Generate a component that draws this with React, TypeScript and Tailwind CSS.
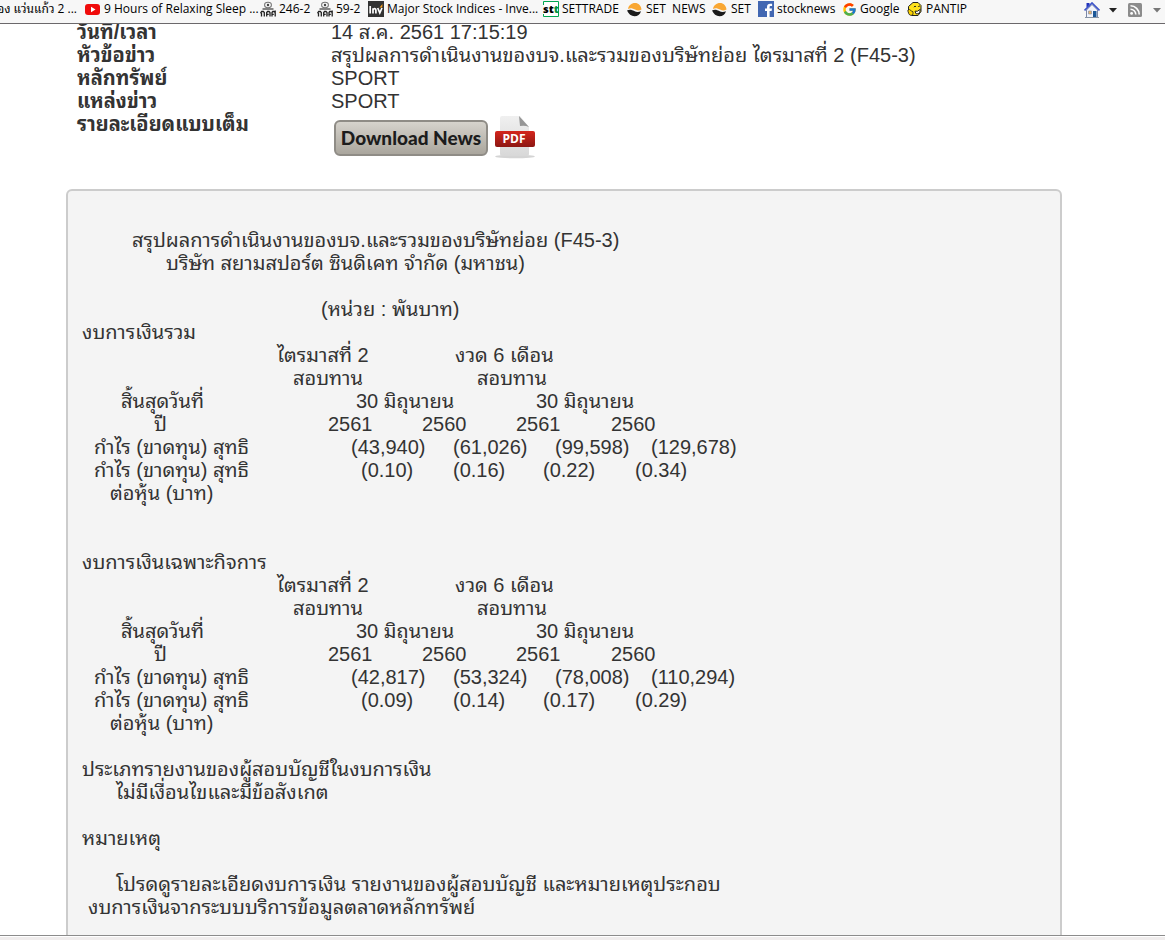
import React from "react";
import { FcGoogle } from "react-icons/fc";

const YoutubeIcon = () => (
  <svg width="16" height="16" viewBox="0 0 16 16" className="shrink-0">
    <rect x="0" y="3" width="15" height="11" rx="3" fill="#f00b0b" />
    <path d="M6 5.8v5.400l4.500-2.700z" fill="#fff" />
  </svg>
);

const KltIcon = () => (
  <svg width="16" height="16" viewBox="0 0 16 16" className="shrink-0" fill="none" stroke="#777">
    <ellipse cx="8" cy="4" rx="3.400" ry="2.700" strokeWidth="1.100" />
    <circle cx="8" cy="4" r="1.200" fill="#444" stroke="none" />
    <path d="M2.500 8h11" strokeWidth="1.800" />
    <path
      d="M1.500 15.500v-3l-.7-.8.9-1.200h1.600l1 1v4M6.700 15.500v-4l.9-1h1.400l1 1v4M7 13.300h1.700M12 15.500v-4l.8-1h1.200l1.200 1v4M12.300 13.300h1.500M15.200 11V9.500"
      stroke="#222"
      strokeWidth="1.300"
    />
  </svg>
);

const InvIcon = () => (
  <svg width="16" height="16" viewBox="0 0 16 16" className="shrink-0">
    <rect width="16" height="16" fill="#333" />
    <path d="M2.200 5v7.500M5 12.500V7.200M5 8.600c.8-1.500 2.900-1.400 2.900.4v3.500" stroke="#fff" strokeWidth="1.700" fill="none" />
    <path d="M9.700 7l2.100 4.800L14 7" stroke="#fff" strokeWidth="1.700" fill="none" />
    <path d="M11.500 6.500L14.500 3l-.3 3.500z" fill="#f7a01b" />
  </svg>
);

const SttIcon = () => (
  <svg width="16" height="16" viewBox="0 0 16 16" className="shrink-0">
    <path d="M.5 4V.5h15V15.500H.5V13" fill="#fff" stroke="#00a651" />
    <text x="0" y="12" fontSize="11" fontWeight="800" fontFamily="Open Sans, sans-serif">
      st<tspan fill="#00913f">t</tspan>
    </text>
  </svg>
);

const SetIcon = () => (
  <svg width="16" height="16" viewBox="0 0 16 16" className="shrink-0">
    <path d="M1 8C1.500 4.500 4.500 2 8 2s6 2.500 6.500 6.500C12 10 10.500 9.800 8 8.500S3.500 6.500 1 8z" fill="#f9a733" />
    <path d="M0 9.500c2.500-1.500 5-.8 7.200.5s4.500 1.200 6.800.2c-1 3.200-3.300 5-6.500 5S1.500 13 0 9.500z" fill="#1b1b1b" />
  </svg>
);

const FacebookIcon = () => (
  <svg width="16" height="16" viewBox="0 0 16 16" className="shrink-0">
    <rect width="16" height="16" fill="#4267b2" />
    <path d="M9 16v-6H7V7.600h2V6c0-2.200 1.300-3.300 3.200-3.300h1.900V5h-1.300c-.9 0-1.200.4-1.200 1.200v1.400H14l-.4 2.400h-2v6z" fill="#fff" />
  </svg>
);

const PantipIcon = () => (
  <svg width="16" height="16" viewBox="0 0 16 16" className="shrink-0" stroke="#222">
    <path d="M6 1.500h5l3 3v6l-3 4H5l-3.500-3v-6z" fill="#ffe11a" strokeLinejoin="round" />
    <path d="M.7 9.500l1.800-1 2 1.500 1.500.8v2.700l-2 1-2-1.200z" fill="#ffd400" strokeWidth=".8" />
    <path d="M8 10.200h2.500L13.300 8.300l-.5 3-1.800 1.500H9z" fill="#fff" strokeWidth="1" />
    <path d="M7 6.200l1-1.200 1 .8M11.200 5.800l.8-1 .9.600" fill="none" strokeWidth="1" />
  </svg>
);

const HomeIcon = () => (
  <svg width="16" height="16" viewBox="0 0 16 16">
    <path d="M2.500 1h3v4h-3z" fill="#2233bb" />
    <path d="M2.500 8v7.500h11V8L8 2.500z" fill="#f2f4fb" stroke="#7c88a8" />
    <path d="M.5 8.500L8 1l7.500 7.500" fill="none" stroke="#3f55c8" strokeWidth="1.700" />
    <path d="M4.500 9h3v3h-3z" fill="#e9b768" stroke="#7c88a8" strokeWidth=".6" />
    <path d="M9 9h3.500v6.500H9z" fill="#1c5797" />
    <path d="M1 15.500h14" stroke="#8794a5" />
  </svg>
);

const RssIcon = () => (
  <svg width="16" height="16" viewBox="0 0 16 16">
    <rect x="1" y="1" width="14" height="14" rx="1.500" fill="#8c8c8c" />
    <circle cx="4.600" cy="11.400" r="1.400" fill="#fff" />
    <path d="M3.500 7.200a5.300 5.300 0 0 1 5.300 5.300M3.500 3.800a8.700 8.700 0 0 1 8.700 8.700" fill="none" stroke="#fff" strokeWidth="1.600" />
  </svg>
);

const PdfIcon = () => (
  <svg width="42" height="43" viewBox="0 0 42 43">
    <defs>
      <linearGradient id="page" x1="0" y1="0" x2="0" y2="1">
        <stop offset="0" stopColor="#f0f0f0" />
        <stop offset="1" stopColor="#d8d8d8" />
      </linearGradient>
      <linearGradient id="band" x1="0" y1="0" x2="0" y2="1">
        <stop offset="0" stopColor="#d4251c" />
        <stop offset="1" stopColor="#8c1713" />
      </linearGradient>
    </defs>
    <ellipse cx="21" cy="40.500" rx="20" ry="1.800" fill="#d4d4d4" />
    <path d="M8 0h18l9 11v27q0 2-2 2H8q-2 0-2-2V2q0-2 2-2z" fill="url(#page)" />
    <path d="M25 0l10 11q-4-2-9-1z" fill="#969696" />
    <rect x="1" y="15" width="40" height="16" rx="2" fill="url(#band)" />
    <text x="20" y="27" textAnchor="middle" fontSize="12" fontWeight="700" fontFamily="Open Sans, sans-serif" fill="#fff">
      PDF
    </text>
  </svg>
);

const bookmarks = [
  { label: "9 Hours of Relaxing Sleep ...", icon: <YoutubeIcon />, width: "w-[175px]" },
  { label: "246-2", icon: <KltIcon />, width: "w-[57px]" },
  { label: "59-2", icon: <KltIcon />, width: "w-[51px]" },
  { label: "Major Stock Indices - Inve...", icon: <InvIcon />, width: "w-[175px]" },
  { label: "SETTRADE", icon: <SttIcon />, width: "w-[84px]" },
  { label: "SET  NEWS", icon: <SetIcon />, width: "w-[85px]" },
  { label: "SET", icon: <SetIcon />, width: "w-[46px]" },
  { label: "stocknews", icon: <FacebookIcon />, width: "w-[84px]" },
  { label: "Google", icon: <FcGoogle size={15} className="shrink-0" />, width: "w-[65px]" },
  { label: "PANTIP", icon: <PantipIcon />, width: "w-[64px]" },
];

const newsInfo = [
  { label: "วันที่/เวลา", value: "14 ส.ค. 2561 17:15:19" },
  { label: "หัวข้อข่าว", value: "สรุปผลการดำเนินงานของบจ.และรวมของบริษัทย่อย ไตรมาสที่ 2 (F45-3)" },
  { label: "หลักทรัพย์", value: "SPORT" },
  { label: "แหล่งข่าว", value: "SPORT" },
];

type StatementProps = {
  title: string;
  profit: string[];
  perShare: string[];
};

const Statement = ({ title, profit, perShare }: StatementProps) => (
  <table className="w-[670px] table-fixed text-left whitespace-nowrap [&_th]:font-normal">
    <caption className="text-left">{title}</caption>
    <colgroup>
      <col className="w-[195px]" />
      <col className="w-[145px]" />
      <col className="w-[94px]" />
      <col className="w-[95px]" />
      <col />
    </colgroup>
    <thead>
      <tr>
        <td />
        <th>ไตรมาสที่ 2</th>
        <th colSpan={3} className="pl-[33px]">งวด 6 เดือน</th>
      </tr>
      <tr>
        <td />
        <th className="pl-4">สอบทาน</th>
        <th colSpan={3} className="pl-[55px]">สอบทาน</th>
      </tr>
      <tr>
        <th className="pl-[39px]">สิ้นสุดวันที่</th>
        <th colSpan={2} className="pl-[79px]">30 มิถุนายน</th>
        <th colSpan={2} className="pl-5">30 มิถุนายน</th>
      </tr>
      <tr>
        <th className="pl-[72px]">ปี</th>
        <th className="pl-[51px]">2561</th>
        <th>2560</th>
        <th>2561</th>
        <th>2560</th>
      </tr>
    </thead>
    <tbody>
      <tr>
        <th className="pl-3">กำไร (ขาดทุน) สุทธิ</th>
        <td className="pl-[74px]">{profit[0]}</td>
        <td className="pl-[31px]">{profit[1]}</td>
        <td className="pl-[39px]">{profit[2]}</td>
        <td className="pl-10">{profit[3]}</td>
      </tr>
      <tr>
        <th className="pl-3">กำไร (ขาดทุน) สุทธิ</th>
        <td className="pl-[84px]">{perShare[0]}</td>
        <td className="pl-[31px]">{perShare[1]}</td>
        <td className="pl-[27px]">{perShare[2]}</td>
        <td className="pl-6">{perShare[3]}</td>
      </tr>
      <tr>
        <th className="pl-7">ต่อหุ้น (บาท)</th>
      </tr>
    </tbody>
  </table>
);

const App = () => {
  return (
    <div className="flex h-screen flex-col overflow-hidden bg-white">
      <nav className="flex h-6 shrink-0 items-start border-b border-[#6b686b] bg-[#f7f7f7] font-['Open_Sans','Noto_Sans_Thai_Looped','Loma',sans-serif] text-xs leading-[18px] whitespace-pre text-black">
        <a href="#" className="flex w-[85px] shrink-0 justify-end overflow-hidden pr-2">
          อง แว่นแก้ว 2 ...
        </a>
        {bookmarks.map(({ label, icon, width }) => (
          <a key={label} href="#" className={`flex shrink-0 items-center gap-[3px] ${width}`}>
            {icon}
            {label}
          </a>
        ))}
        <div className="ml-auto flex items-center pt-0.5 pr-1">
          <button aria-label="Home">
            <HomeIcon />
          </button>
          <button aria-label="Home menu" className="ml-[9px]">
            <svg width="8" height="5" viewBox="0 0 8 5">
              <path d="M0 0h8L4 4.500z" fill="#222" />
            </svg>
          </button>
          <button aria-label="Feeds" className="ml-[10px]">
            <RssIcon />
          </button>
          <button aria-label="Feeds menu" className="ml-[10px]">
            <svg width="8" height="5" viewBox="0 0 8 5">
              <path d="M0 0h8L4 4.500z" fill="#777" />
            </svg>
          </button>
        </div>
      </nav>

      <main className="min-h-0 flex-1 overflow-hidden font-['Liberation_Sans','Noto_Sans_Thai_Looped','Loma','Noto_Sans_Thai',sans-serif] text-xl leading-[23px] text-[#333]">
        <table className="-mt-[3px] ml-[77px] text-left whitespace-nowrap">
          <tbody>
            {newsInfo.map(({ label, value }) => (
              <tr key={label}>
                <th className="w-[254px] font-bold">{label}</th>
                <td>{value}</td>
              </tr>
            ))}
            <tr>
              <th className="w-[254px] align-top font-bold">รายละเอียดแบบเต็ม</th>
              <td className="pt-[3px] pl-[3px]">
                <div className="flex items-center gap-1.5">
                  <button className="h-9 w-[154px] rounded-md border-2 border-[#8f8c86] bg-linear-to-b from-[#d6d3cc] to-[#aaa69d] font-['Lato',sans-serif] text-[19px] leading-none font-black text-[#1c1c1c]">
                    Download News
                  </button>
                  <a href="#" aria-label="PDF">
                    <PdfIcon />
                  </a>
                </div>
              </td>
            </tr>
          </tbody>
        </table>

        <section className="mt-[30px] mr-[103px] ml-[66px] rounded-md border-2 border-[#ccc] bg-[#f4f4f4] px-3.5 pt-[38px] pb-12">
          <h1 className="pl-[50px]">สรุปผลการดำเนินงานของบจ.และรวมของบริษัทย่อย (F45-3)</h1>
          <p className="pl-[84px]">บริษัท สยามสปอร์ต ซินดิเคท จำกัด (มหาชน)</p>
          <p className="mt-[23px] pl-[239px]">(หน่วย : พันบาท)</p>
          <Statement
            title="งบการเงินรวม"
            profit={["(43,940)", "(61,026)", "(99,598)", "(129,678)"]}
            perShare={["(0.10)", "(0.16)", "(0.22)", "(0.34)"]}
          />
          <div className="mt-[46px]">
            <Statement
              title="งบการเงินเฉพาะกิจการ"
              profit={["(42,817)", "(53,324)", "(78,008)", "(110,294)"]}
              perShare={["(0.09)", "(0.14)", "(0.17)", "(0.29)"]}
            />
          </div>
          <p className="mt-[23px]">ประเภทรายงานของผู้สอบบัญชีในงบการเงิน</p>
          <p className="pl-[34px]">ไม่มีเงื่อนไขและมีข้อสังเกต</p>
          <p className="mt-[23px]">หมายเหตุ</p>
          <p className="mt-[23px] pl-[34px]">โปรดดูรายละเอียดงบการเงิน รายงานของผู้สอบบัญชี และหมายเหตุประกอบ</p>
          <p className="pl-1.5">งบการเงินจากระบบบริการข้อมูลตลาดหลักทรัพย์</p>
        </section>
      </main>

      <footer className="h-[5px] shrink-0 border-t border-[#8c8c8c] bg-white pt-px">
        <div className="h-full bg-[#f0eded]" />
      </footer>
    </div>
  );
};

export default App;
